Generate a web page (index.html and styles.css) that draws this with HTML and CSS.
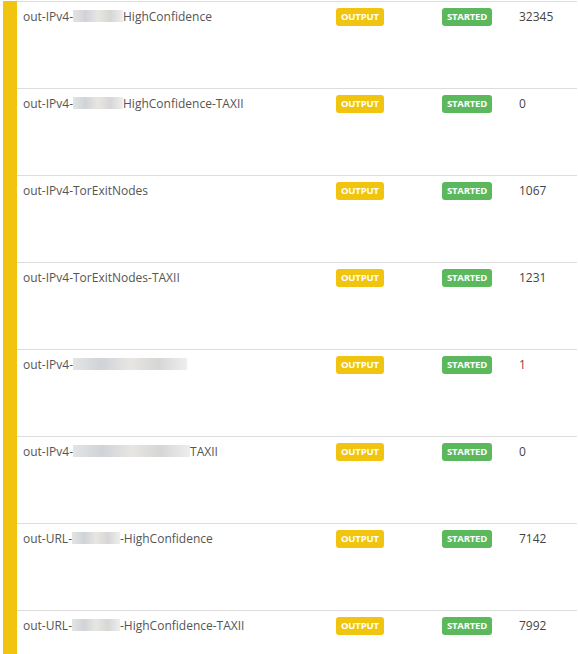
FILE: index.html
```html
<!DOCTYPE html>
<html lang="en">
<head>
  <meta charset="UTF-8" />
  <title>Outputs</title>
  <link rel="stylesheet" href="styles.css">
</head>
<body>

<!-- Output nodes list -->
<div class="list">
  <div class="row">
    <div class="name">out-IPv4-<span class="blur w50"></span>HighConfidence</div>
    <div class="cell"><span class="badge output">OUTPUT</span></div>
    <div class="cell"><span class="badge started">STARTED</span></div>
    <div class="count">32345</div>
  </div>
  <div class="row">
    <div class="name">out-IPv4-<span class="blur w50"></span>HighConfidence-TAXII</div>
    <div class="cell"><span class="badge output">OUTPUT</span></div>
    <div class="cell"><span class="badge started">STARTED</span></div>
    <div class="count">0</div>
  </div>
  <div class="row">
    <div class="name">out-IPv4-TorExitNodes</div>
    <div class="cell"><span class="badge output">OUTPUT</span></div>
    <div class="cell"><span class="badge started">STARTED</span></div>
    <div class="count">1067</div>
  </div>
  <div class="row">
    <div class="name">out-IPv4-TorExitNodes-TAXII</div>
    <div class="cell"><span class="badge output">OUTPUT</span></div>
    <div class="cell"><span class="badge started">STARTED</span></div>
    <div class="count">1231</div>
  </div>
  <div class="row">
    <div class="name">out-IPv4-<span class="blur w110"></span></div>
    <div class="cell"><span class="badge output">OUTPUT</span></div>
    <div class="cell"><span class="badge started">STARTED</span></div>
    <div class="count red">1</div>
  </div>
  <div class="row">
    <div class="name">out-IPv4-<span class="blur w113"></span>TAXII</div>
    <div class="cell"><span class="badge output">OUTPUT</span></div>
    <div class="cell"><span class="badge started">STARTED</span></div>
    <div class="count">0</div>
  </div>
  <div class="row">
    <div class="name">out-URL-<span class="blur w52"></span>-HighConfidence</div>
    <div class="cell"><span class="badge output">OUTPUT</span></div>
    <div class="cell"><span class="badge started">STARTED</span></div>
    <div class="count">7142</div>
  </div>
  <div class="row">
    <div class="name">out-URL-<span class="blur w52"></span>-HighConfidence-TAXII</div>
    <div class="cell"><span class="badge output">OUTPUT</span></div>
    <div class="cell"><span class="badge started">STARTED</span></div>
    <div class="count">7992</div>
  </div>
</div>

</body>
</html>
```

FILE: styles.css
```css
body { margin: 0; background: #fff; font-family: "Open Sans", sans-serif; font-size: 12px; color: #555; }
.list { margin: 1px 1px 0 3px; border-left: 14px solid #f1c40f; }
.row { display: grid; grid-template-columns: 313px 106px 77px 1fr; height: 86px; border-top: 1px solid #ddd; }
.name, .cell, .count { padding: 6px 0 0 6px; line-height: 17px; }
.cell { display: flex; align-items: flex-start; }
.count { color: #444; }
.count.red { color: #8b3a3a; }
.badge { height: 18px; line-height: 18px; padding: 0 5px; border-radius: 3px; color: #fff; font-weight: 700; font-size: 9.5px; letter-spacing: -0.2px; }
.output { background: #f1c40f; }
.started { background: #5cb85c; }
.blur { display: inline-block; height: 12px; vertical-align: -1px; background: linear-gradient(90deg, #e4e4e4, #cfd3d8, #e8e6e2, #d6d6d6, #eeeeee); }
.w50 { width: 50px; }
.w52 { width: 48px; }
.w110 { width: 114px; }
.w113 { width: 117px; }
```
